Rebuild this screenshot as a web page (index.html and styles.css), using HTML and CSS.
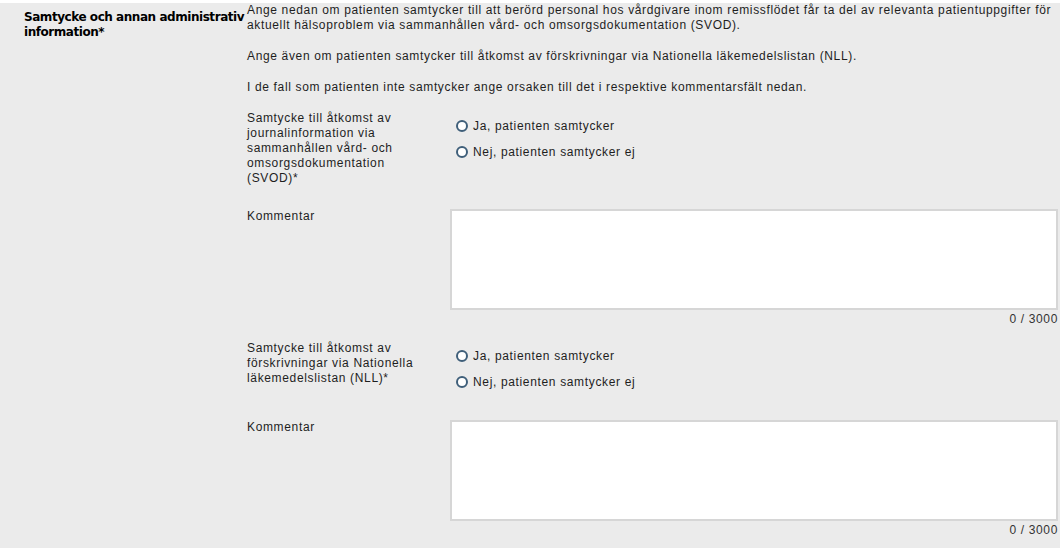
FILE: index.html
```html
<!DOCTYPE html>
<html>
<head>
    <meta charset="utf-8">
    <link rel="stylesheet" href="styles.css">
</head>
<body>
    <div class="panel">
        <div class="section">
            <div class="section-label">Samtycke och annan administrativ information*</div>
            <div class="section-body">
                <p class="intro">Ange nedan om patienten samtycker till att berörd personal hos vårdgivare inom remissflödet får ta del av relevanta patientuppgifter för aktuellt hälsoproblem via sammanhållen vård- och omsorgsdokumentation (SVOD).</p>
                <p class="intro">Ange även om patienten samtycker till åtkomst av förskrivningar via Nationella läkemedelslistan (NLL).</p>
                <p class="intro">I de fall som patienten inte samtycker ange orsaken till det i respektive kommentarsfält nedan.</p>

                <div class="question">
                    <div class="field-row">
                        <div class="field-label">Samtycke till åtkomst av journalinformation via sammanhållen vård- och omsorgsdokumentation (SVOD)*</div>
                        <div class="radio-group">
                            <label class="radio"><span class="radio-dot"></span>Ja, patienten samtycker</label>
                            <label class="radio"><span class="radio-dot"></span>Nej, patienten samtycker ej</label>
                        </div>
                    </div>
                    <div class="field-row comment-row">
                        <div class="field-label">Kommentar</div>
                        <div class="comment-box">
                            <textarea class="comment-input"></textarea>
                            <div class="counter">0 / 3000</div>
                        </div>
                    </div>
                </div>

                <div class="question">
                    <div class="field-row">
                        <div class="field-label">Samtycke till åtkomst av förskrivningar via Nationella läkemedelslistan (NLL)*</div>
                        <div class="radio-group">
                            <label class="radio"><span class="radio-dot"></span>Ja, patienten samtycker</label>
                            <label class="radio"><span class="radio-dot"></span>Nej, patienten samtycker ej</label>
                        </div>
                    </div>
                    <div class="field-row comment-row">
                        <div class="field-label">Kommentar</div>
                        <div class="comment-box">
                            <textarea class="comment-input"></textarea>
                            <div class="counter">0 / 3000</div>
                        </div>
                    </div>
                </div>
            </div>
        </div>
    </div>
</body>
</html>
```

FILE: styles.css
```css
body {
    margin: 0;
    background: #ffffff;
    font-family: 'Liberation Sans', Arial, sans-serif;
    font-size: 12px;
    letter-spacing: 0.65px;
    color: #1e1e1e;
}

.panel {
    margin-top: 3px;
    background: #ebebeb;
    min-height: 545px;
}

.section {
    display: grid;
    grid-template-columns: 247px 1fr;
}

.section-label {
    padding: 7px 0 0 24px;
    font-family: 'DejaVu Sans', Verdana, sans-serif;
    font-size: 12px;
    font-weight: bold;
    letter-spacing: -0.45px;
    line-height: 15px;
    color: #000;
}

.section-body {
    padding-right: 2px;
}

.intro {
    margin: 0 0 16px 0;
    line-height: 15px;
}

.question {
    margin-top: 16px;
}

.question + .question {
    margin-top: 14px;
}

.field-row {
    display: grid;
    grid-template-columns: 203px 1fr;
    line-height: 15px;
}

.field-label {
    padding-right: 28px;
}

.comment-row {
    margin-top: 23px;
}

.radio-group {
    padding: 2px 0 2px 6px;
}

.radio {
    display: flex;
    align-items: center;
    height: 26px;
    cursor: pointer;
}

.radio-dot {
    width: 8px;
    height: 8px;
    border: 2px solid #3f5f7a;
    border-radius: 50%;
    background: #fff;
    margin-right: 5px;
}

.comment-input {
    display: block;
    width: 100%;
    height: 101px;
    box-sizing: border-box;
    border: 2px solid #d6d6d6;
    background: #fff;
    resize: none;
    margin: 0;
}

.counter {
    margin-top: 2px;
    text-align: right;
    line-height: 15px;
    color: #333;
}
```
